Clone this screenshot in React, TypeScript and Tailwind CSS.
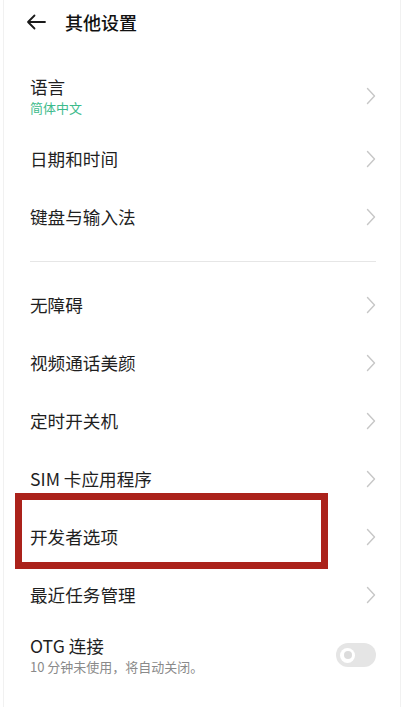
import React from "react";

const font = { fontFamily: '"Noto Sans CJK SC", "Noto Sans", sans-serif' };

function Chevron() {
  return (
    <svg width="10" height="18" viewBox="0 0 10 18" className="shrink-0">
      <polyline points="1.5,1.5 8.5,9 1.5,16.5" fill="none" stroke="#c7c7c7" strokeWidth="1.4" strokeLinecap="round" strokeLinejoin="round" />
    </svg>
  );
}

function Row({ title, boxed }: { title: string; boxed?: boolean }) {
  return (
    <div className="relative flex h-[58px] items-center justify-between pl-[26px] pr-[24px]">
      <span className="text-[17.6px] leading-[22px] text-[#1f1f1f]">{title}</span>
      <Chevron />
      {boxed && (
        <div className="pointer-events-none absolute left-[11px] top-[-15px] h-[76px] w-[313px] border-[7px] border-[#ab221b]" />
      )}
    </div>
  );
}

export default function App() {
  return (
    <div className="min-h-[707px] w-[404px] bg-white" style={font}>
      <div className="mx-[3px] min-h-[707px] border-x border-[#f1f1f1]">
        <div className="flex h-[44px] items-center pl-[22px]">
          <svg width="20" height="16" viewBox="0 0 20 16">
            <path d="M19 8H2M8.5 1.5L2 8l6.5 6.5" fill="none" stroke="#1a1a1a" strokeWidth="1.8" strokeLinecap="round" strokeLinejoin="round" />
          </svg>
          <span className="ml-[19px] text-[18px] font-medium leading-[24px] text-[#111]">其他设置</span>
        </div>
        <div className="mt-[18px] flex h-[68px] items-center justify-between pl-[26px] pr-[24px]">
          <div className="flex flex-col">
            <span className="text-[17.6px] leading-[22px] text-[#1f1f1f]">语言</span>
            <span className="mt-[1px] text-[13px] leading-[18px] text-[#3dbb8c]">简体中文</span>
          </div>
          <Chevron />
        </div>
        <Row title="日期和时间" />
        <Row title="键盘与输入法" />
        <div className="flex h-[30px] items-center pl-[26px] pr-[24px]">
          <div className="h-px w-full bg-[#e6e6e6]" />
        </div>
        <Row title="无障碍" />
        <Row title="视频通话美颜" />
        <Row title="定时开关机" />
        <Row title="SIM 卡应用程序" />
        <Row title="开发者选项" boxed />
        <Row title="最近任务管理" />
        <div className="flex h-[62px] items-center justify-between pl-[26px] pr-[24px]">
          <div className="flex flex-col">
            <span className="text-[17.6px] leading-[22px] text-[#1f1f1f]">OTG 连接</span>
            <span className="mt-[1px] text-[13px] leading-[18px] text-[#8a8a8a]">10 分钟未使用，将自动关闭。</span>
          </div>
          <div className="flex h-[24px] w-[40px] items-center rounded-full bg-[#e5e5e5] pl-[4px]">
            <div className="flex h-[15px] w-[15px] items-center justify-center rounded-full bg-white">
              <div className="h-[8px] w-[8px] rounded-full bg-[#dcdcdc]" />
            </div>
          </div>
        </div>
      </div>
    </div>
  );
}
